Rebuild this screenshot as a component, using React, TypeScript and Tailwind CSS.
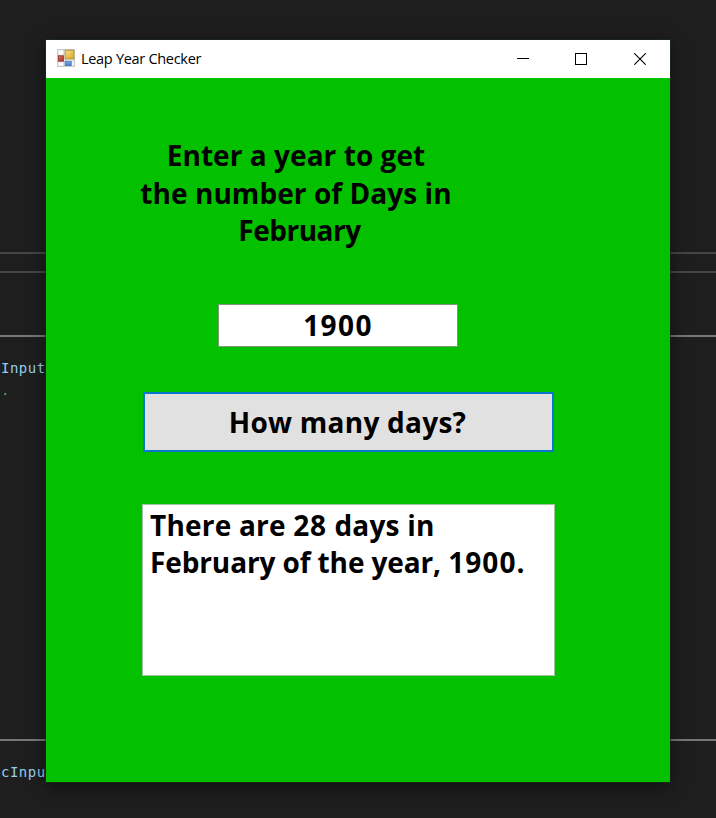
import React from "react";

function AppIcon() {
  return (
    <svg width="18" height="18" viewBox="0 0 18 18" className="relative -top-px block">
      <defs>
        <linearGradient id="gold" x1="0" y1="0" x2="1" y2="1">
          <stop offset="0" stopColor="#fbe08a" />
          <stop offset="1" stopColor="#dba51c" />
        </linearGradient>
        <linearGradient id="red" x1="0" y1="0" x2="1" y2="1">
          <stop offset="0" stopColor="#d8746a" />
          <stop offset="1" stopColor="#a82a22" />
        </linearGradient>
        <linearGradient id="blue" x1="0" y1="0" x2="0" y2="1">
          <stop offset="0" stopColor="#7eaef0" />
          <stop offset="1" stopColor="#3b78d4" />
        </linearGradient>
      </defs>
      <rect x="0.5" y="0.5" width="17" height="17" fill="#dedede" stroke="#cacaca" />
      <rect x="1.5" y="1.5" width="4.5" height="4" fill="#fff" />
      <rect x="1.5" y="13.3" width="4.5" height="3.2" fill="#fff" />
      <rect x="15.2" y="12.5" width="1.5" height="4" fill="#fff" />
      <rect x="8.2" y="1.2" width="8.6" height="8.6" fill="url(#gold)" stroke="#b8943f" />
      <rect x="1.4" y="6.8" width="5" height="5.4" fill="url(#red)" stroke="#a33f38" />
      <rect x="8.2" y="12.3" width="6" height="4.3" fill="url(#blue)" stroke="#4b78bd" strokeWidth="0.8" />
    </svg>
  );
}

function EditorBackdrop() {
  return (
    <div className="flex h-full w-full flex-col bg-[#1e1e1e] pt-[252px] font-['DejaVu_Sans_Mono',monospace] text-[14px] leading-[22px]">
      <div className="h-[2px] shrink-0 bg-[#464646]" />
      <div className="mt-[17px] h-[2px] shrink-0 bg-[#464646]" />
      <div className="mt-[62px] h-[2px] shrink-0 bg-[#777777]" />
      <div className="mt-[20px] h-[22px] pl-[1px] tracking-[0.5px] text-[#95cdec]">Input</div>
      <div className="h-[22px] pl-[1px] text-[#57a64a]">.</div>
      <div className="mt-[338px] h-[2px] shrink-0 bg-[#777777]" />
      <div className="mt-[20px] h-[22px] pl-[1px] tracking-[0.5px] text-[#95cdec]">cInput</div>
    </div>
  );
}

function TitleBar() {
  return (
    <header className="flex h-[38px] items-center bg-white pl-[11px]">
      <AppIcon />
      <span className="ml-[6px] font-['Open_Sans',sans-serif] text-[14.5px] leading-[20px] tracking-[-0.3px] text-black">
        Leap Year Checker
      </span>
      <div className="ml-auto flex pr-[24px]">
        <svg width="12" height="12" viewBox="0 0 12 12" shapeRendering="crispEdges">
          <path d="M0 5.5H12" stroke="#000" />
        </svg>
        <svg className="ml-[46px]" width="12" height="12" viewBox="0 0 12 12" shapeRendering="crispEdges">
          <rect x="0.5" y="0.5" width="11" height="11" fill="none" stroke="#000" />
        </svg>
        <svg className="ml-[47px]" width="12" height="12" viewBox="0 0 12 12">
          <path d="M0.3 0.3L11.7 11.7M11.7 0.3L0.3 11.7" stroke="#000" strokeWidth="1.1" />
        </svg>
      </div>
    </header>
  );
}

export default function App() {
  return (
    <div className="relative h-[818px] w-[716px] overflow-hidden">
      <EditorBackdrop />
      <main className="absolute left-[46px] top-[40px] flex h-[742px] w-[624px] flex-col bg-[#04c100] shadow-[0_4px_16px_rgba(0,0,0,0.5)] outline outline-1 outline-[#1c301c]/60">
        <TitleBar />
        <div className="flex flex-col items-start font-['Open_Sans','Noto_Sans',sans-serif] text-[28px] font-bold leading-[37.5px] text-black">
          <h1 className="ml-[90px] mt-[59px] flex w-[320px] flex-col items-center whitespace-nowrap">
            <span className="tracking-[0.05px]">Enter a year to get</span>
            <span className="tracking-[0.06px]">the number of Days in</span>
            <span className="pl-[7px] tracking-[-0.5px]">February</span>
          </h1>
          <div className="ml-[172px] mt-[54px] flex h-[43px] w-[240px] items-center justify-center border border-[#7a9a7a] bg-white">
            <span className="pt-[1px] tracking-[1.4px]">1900</span>
          </div>
          <button className="ml-[97px] mt-[45px] flex h-[60px] w-[411px] items-center justify-center border-2 border-[#0878cc] bg-[#e1e1e1]">
            <span className="pr-[2px] pt-[2px] tracking-[0.25px]">How many days?</span>
          </button>
          <div className="ml-[96px] mt-[52px] flex h-[172px] w-[413px] flex-col items-start whitespace-nowrap border border-[#9fc79f] bg-white pl-[7px] pt-[2px]">
            <span className="tracking-[0.2px]">There are <span className="tracking-[0.9px]">28</span> days in</span>
            <span className="tracking-[-0.12px]">February of the year, <span className="tracking-[1.1px]">1900.</span></span>
          </div>
        </div>
      </main>
    </div>
  );
}
